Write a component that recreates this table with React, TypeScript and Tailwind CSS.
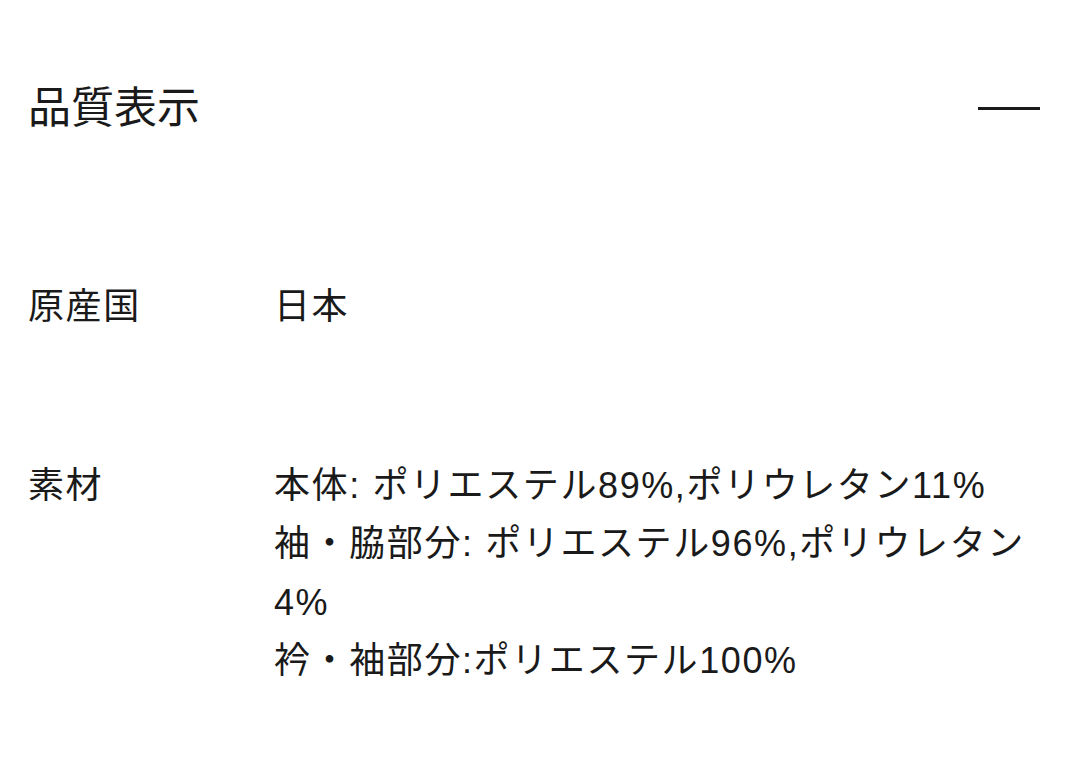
const rows = [
  { label: "原産国", lines: ["日本"] },
  {
    label: "素材",
    lines: [
      "本体: ポリエステル89%,ポリウレタン11%",
      "袖・脇部分: ポリエステル96%,ポリウレタン4%",
      "衿・袖部分:ポリエステル100%",
    ],
  },
];

export default function App() {
  return (
    <div
      className="w-[1080px] h-[774px] bg-white text-[#1a1a1a] overflow-hidden"
      style={{ fontFamily: '"Liberation Sans", "Noto Sans CJK JP", sans-serif' }}
    >
      <div className="pl-[28px] pr-[40px]">
        <div className="mt-[77px] h-[63px] flex items-center justify-between">
          <h2 className="text-[43px] leading-[63px] font-normal">品質表示</h2>
          <div className="w-[62px] h-[3px] bg-[#1a1a1a]" />
        </div>

        <div className="mt-[138px] flex flex-col gap-[120px]">
          {rows.map((row) => (
            <div
              key={row.label}
              className="flex text-[36px] leading-[58.5px] tracking-[1.6px]"
            >
              <div className="w-[246px] shrink-0">{row.label}</div>
              <div className="w-[766px]">
                {row.lines.map((line) => (
                  <p key={line}>{line}</p>
                ))}
              </div>
            </div>
          ))}
        </div>
      </div>
    </div>
  );
}
